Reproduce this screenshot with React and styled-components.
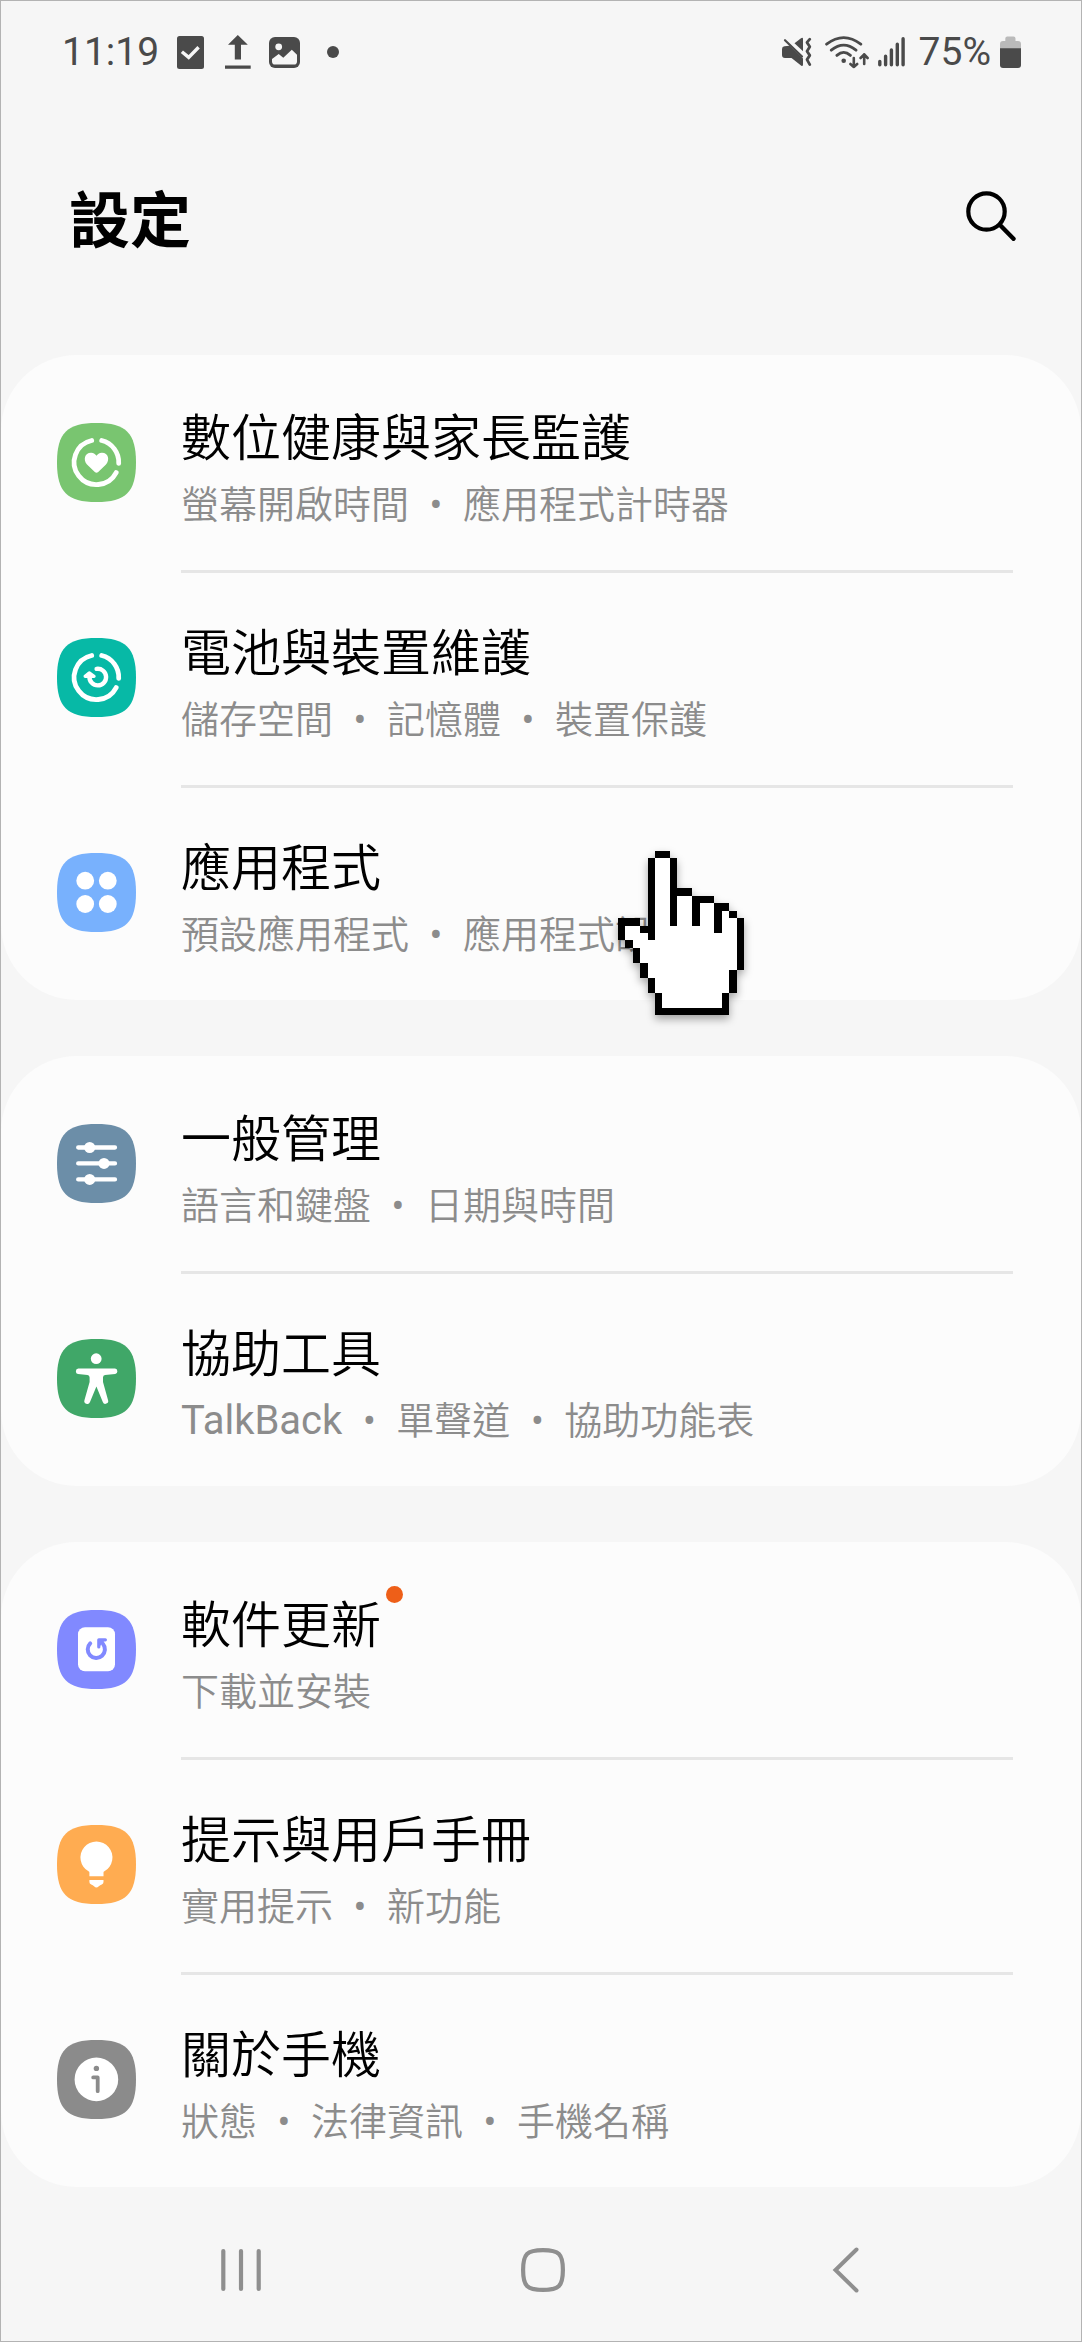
import styled, { createGlobalStyle } from 'styled-components';

const GlobalStyle = createGlobalStyle`
    * {
        box-sizing: border-box;
    }
    body {
        margin: 0;
        background: #f5f5f5;
        font-family: Roboto, "Noto Sans CJK TC", sans-serif;
    }
    button {
        padding: 0;
        border: none;
        background: none;
        color: inherit;
        cursor: pointer;
    }
    svg {
        display: block;
        flex-shrink: 0;
    }
`;

const Page = styled.div`
    display: flex;
    flex-direction: column;
    min-height: 100vh;
    border: 1px solid #b3b3b3;
    background: #f6f6f6;
`;
const StatusBar = styled.div`
    display: flex;
    justify-content: space-between;
    align-items: center;
    height: 102px;
    padding: 0 60px 0 61px;
    color: #4a4a4a;
    font-size: 39px;
    line-height: 46px;
`;
const StatusGroup = styled.div`
    display: flex;
    align-items: center;
    gap: ${props => props.$gap}px;
`;
const Header = styled.header`
    display: flex;
    justify-content: space-between;
    align-items: center;
    padding: 75px 65px 101px 68px;
    h1 {
        margin: 0;
        padding-top: 12px;
        font-size: 61px;
        font-weight: 700;
        line-height: 64px;
        color: #000;
    }
`;
const Groups = styled.main`
    display: flex;
    flex-direction: column;
    gap: 56px;
`;
const Card = styled.ul`
    margin: 0;
    padding: 0;
    list-style: none;
    border-radius: 76px;
    background: #fcfcfc;
`;
const Row = styled.li`
    position: relative;
`;
const RowLink = styled.a`
    display: flex;
    gap: 45px;
    padding: 0 68px 0 56px;
    text-decoration: none;
    > svg {
        align-self: center;
    }
`;
const RowText = styled.div`
    flex: 1;
    padding: 49px 0 39px;
    border-top: 3px solid ${props => (props.$divider ? '#e6e6e6' : 'transparent')};
    font-weight: 350;
`;
const Title = styled.span`
    display: inline-block;
    position: relative;
    font-size: 50px;
    line-height: 64px;
    color: #000;
    vertical-align: top;
`;
const Badge = styled.span`
    position: absolute;
    top: -8px;
    left: calc(100% + 5px);
    width: 17px;
    height: 17px;
    border-radius: 50%;
    background: #ee5f18;
`;
const Summary = styled.div`
    margin-top: 8px;
    font-size: 38px;
    line-height: 52px;
    color: #8c8c8c;
`;
const Latin = styled.span`
    font-size: 40px;
    font-weight: 400;
    line-height: 1;
`;
const Bullet = styled.span`
    display: inline-block;
    width: 54px;
    font-weight: 400;
    text-align: center;
`;
const Pointer = styled.svg`
    position: absolute;
    top: 66px;
    left: 617px;
    filter: drop-shadow(0 4px 4px rgba(0, 0, 0, .35));
`;
const NavBar = styled.nav`
    display: grid;
    grid-template-columns: repeat(3, 1fr);
    justify-items: center;
    padding: 60px 84px 48px 89px;
    color: #8f8f8f;
`;

/* settings icons, all on the same squircle */
const Squircle = ({ color, children }) => (
    <svg width="79" height="79" viewBox="0 0 79 79" fill="#fff" aria-hidden="true">
        <path fill={color} d="M0 39.5C0 10 10 0 39.5 0S79 10 79 39.5 69 79 39.5 79 0 69 0 39.5Z" />
        {children}
    </svg>
);
const Ring = () => (
    <path
        d="M34.7 17.5A22.3 22.3 0 1 0 59.2 49.6M44.7 17.5A22.3 22.3 0 0 1 61.7 40.3"
        fill="none" stroke="#fff" strokeWidth="4.8" strokeLinecap="round"
    />
);
const WellbeingIcon = () => (
    <Squircle color="#79c570">
        <Ring />
        <path d="M37.8 49 30 41.4C26 37 27.5 29.8 34 29.7 36.5 29.6 38.5 31 39.5 32.8 40.5 31 42.5 29.6 45 29.7 51.5 29.8 53 37 49 41.4L41.2 49Q39.5 50.4 37.8 49Z" />
    </Squircle>
);
const CareIcon = () => (
    <Squircle color="#07b9a6">
        <Ring />
        <g fill="none" stroke="#fff" strokeWidth="4.4" strokeLinecap="round" strokeLinejoin="round">
            <path d="M39.6 30.9A8.3 8.3 0 1 1 32.5 38.6" />
            <path strokeWidth="3.4" d="M28.2 38.3 32.2 35 37 38.3Z" />
        </g>
    </Squircle>
);
const AppsIcon = () => (
    <Squircle color="#78b1fd">
        <circle cx="28.2" cy="27.7" r="8.9" />
        <circle cx="50.8" cy="27.7" r="8.9" />
        <circle cx="28.2" cy="51" r="8.9" />
        <circle cx="50.8" cy="51" r="8.9" />
    </Squircle>
);
const GeneralIcon = () => (
    <Squircle color="#6c8ea8">
        <path d="M21.2 23.5H58M21.2 39.4H58M21.2 55.4H58" stroke="#fff" strokeWidth="4.3" strokeLinecap="round" />
        <circle cx="32.7" cy="23.5" r="5.5" />
        <circle cx="47" cy="39.4" r="5.5" />
        <circle cx="32.7" cy="55.4" r="5.5" />
    </Squircle>
);
const AccessibilityIcon = () => (
    <Squircle color="#40a768">
        <circle cx="39.2" cy="19.7" r="5.4" />
        <path d="M21.3 29.5H58A2.8 2.8 0 0 1 58.2 35L48 36Q46 36.3 46 38.5V43L51 61A2.7 2.7 0 0 1 45.8 63L39.4 47.5 33 63A2.7 2.7 0 0 1 27.5 61L32.6 43V38.5Q32.6 36.3 30.5 36L21 35A2.8 2.8 0 0 1 21.3 29.5Z" />
    </Squircle>
);
const UpdateIcon = () => (
    <Squircle color="#8189ff">
        <rect x="21" y="17.3" width="37" height="44" rx="7" />
        <g fill="none" stroke="#8189ff" strokeWidth="4" strokeLinecap="round">
            <path d="M33.2 33.3A8.6 8.6 0 1 0 45.9 33.8" />
            <path strokeWidth="3.2" strokeLinejoin="round" d="M41.8 37V29.8H48.4" />
        </g>
        <path fill="#8189ff" d="M41 29H49L43 36Z" />
    </Squircle>
);
const TipsIcon = () => (
    <Squircle color="#ffac51">
        <path d="M32.4 51.3V47.5Q32.4 46.8 31.5 46.3A16 16 0 1 1 47.4 46.3Q46.5 46.8 46.5 47.5V51.3Z" />
        <path d="M32.4 55H46.5V57Q46.5 58.8 44.8 59.4C42.5 60 41 62.5 39.4 62.5S36.5 60 34.2 59.4Q32.4 58.8 32.4 57Z" />
    </Squircle>
);
const AboutIcon = () => (
    <Squircle color="#8b8b8b">
        <circle cx="39.4" cy="39.4" r="21.8" />
        <circle cx="39.4" cy="28.4" r="2.7" fill="#8b8b8b" />
        <path d="M36.2 37.4H40.7V51.2" fill="none" stroke="#8b8b8b" strokeWidth="3.8" strokeLinecap="round" strokeLinejoin="round" />
    </Squircle>
);

/* status bar icons */
const TaskIcon = () => (
    <svg width="28" height="33" viewBox="0 0 28 33">
        <rect width="27" height="33" rx="2.5" fill="#4a4a4a" />
        <path d="M4.9 15.7 11.7 21.4 21.6 11.3" fill="none" stroke="#f6f6f6" strokeWidth="3.4" />
    </svg>
);
const UploadIcon = () => (
    <svg width="28" height="34" viewBox="-2 0 28 34" fill="#4a4a4a">
        <path d="M12.8 0 22.8 9.7H16V24.5H9.8V9.7H3ZM0 30.5H25.7V33.7H0Z" />
    </svg>
);
const ImageIcon = () => (
    <svg width="32" height="31" viewBox="0 0 32 31">
        <rect width="31" height="31" rx="6" fill="#4a4a4a" />
        <g fill="#f6f6f6">
            <circle cx="9.7" cy="9.8" r="3.4" />
            <path d="M3 22 9.7 17 14.3 20.8 22.8 12.8 28 17.8V24.5Q28 27.6 25 27.6H6Q3 27.6 3 24.5Z" />
        </g>
    </svg>
);
const MoreDot = () => (
    <svg width="28" height="12" viewBox="0 0 28 12">
        <circle cx="14" cy="6" r="6" fill="#4a4a4a" />
    </svg>
);
const VibrateIcon = () => (
    <svg width="34" height="33" viewBox="0 0 34 33" fill="#4a4a4a">
        <path d="M12.5 7.2 19 2.2Q21 1.2 21 3V15.2Z" />
        <path d="M2.5 10.2 7.5 9.8 21 22.5V28.5Q21 30.8 19 29.4L9.5 22H3Q0 22 0 19V13Q0 10.5 2.5 10.2Z" />
        <g fill="none" stroke="#4a4a4a" strokeLinecap="round" strokeLinejoin="round">
            <path strokeWidth="2.2" d="M3 4.2 20 20.6" />
            <path strokeWidth="2.8" d="M27.8 3.2 25 6.4 27.8 10.8 25 15.2 27.8 19.4 25 23.6 27.8 28.6" />
        </g>
    </svg>
);
const WifiIcon = () => (
    <svg width="44" height="33" viewBox="0 0 44 33" fill="none" stroke="#4a4a4a" strokeWidth="2.8" strokeLinecap="round">
        <path d="M1.6 8.2Q18.7-5 35.8 8.2M6.3 14.2Q18.7 4 31 14.2M11.9 19.4Q18.7 13.4 25.4 19.4" />
        <circle cx="18.7" cy="24.7" r="2.3" fill="#4a4a4a" stroke="none" />
        <path strokeWidth="2.6" strokeLinejoin="round" d="M28.8 22V31M25.4 28 28.8 31 32.2 28M39.2 28V18.4M35.6 22 39.2 18.4 42.6 22" />
    </svg>
);
const SignalIcon = () => (
    <svg width="32" height="33" viewBox="0 0 32 33">
        <path
            d="M1.8 25.5V28.8M7.6 20.2V28.8M13.4 14V28.8M19.3 8.3V28.8M25.1 2.8V28.8"
            stroke="#4a4a4a" strokeWidth="3.4" strokeLinecap="round"
        />
    </svg>
);
const BatteryIcon = () => (
    <svg width="21" height="33" viewBox="0 0 21 33">
        <path d="M0 13V8Q0 5 3 5H5.3V2.5Q5.3.5 7.3.5H13.5Q15.5.5 15.5 2.5V5H18Q21 5 21 8V13Z" fill="#bababa" />
        <path d="M0 12.3H21V29Q21 32 18 32H3Q0 32 0 29Z" fill="#4a4a4a" />
    </svg>
);

// black outline drawn one grid cell at a time
const HandPointer = () => (
    <Pointer width="126" height="164" viewBox="0 0 17 22" preserveAspectRatio="none" shapeRendering="crispEdges" aria-hidden="true">
        <path fill="#fff" d="M5 1H7V6H10V7H13V8H15V9H16V16H15V19H14V21H6V19H5V17H4V15H3V13H2V12H1V10H4V1Z" />
        <path
            d="M5 0h2v1h-2ZM4 1h1v11h-1ZM7 1h1v9h-1ZM8 5h2v1h-2ZM10 6h3v1h-2v3h-1ZM13 7h2v1h-1v3h-1ZM15 8h1v1h-1ZM16 9h1v7h-1ZM15 16h1v3h-1ZM14 19h1v3h-10v-3h1v2h8ZM4 17h1v2h-1ZM3 15h1v2h-1ZM2 13h1v2h-1ZM1 12h1v1h-1ZM0 9h3v1h-2v2h-1ZM3 10h1v1h-1Z"
        />
    </Pointer>
);

const groups = [
    [
        { title: '數位健康與家長監護', summary: ['螢幕開啟時間', '應用程式計時器'], Icon: WellbeingIcon },
        { title: '電池與裝置維護', summary: ['儲存空間', '記憶體', '裝置保護'], Icon: CareIcon },
        { title: '應用程式', summary: ['預設應用程式', '應用程式設定'], Icon: AppsIcon, pointed: true },
    ],
    [
        { title: '一般管理', summary: ['語言和鍵盤', '日期與時間'], Icon: GeneralIcon },
        { title: '協助工具', summary: ['TalkBack', '單聲道', '協助功能表'], Icon: AccessibilityIcon },
    ],
    [
        { title: '軟件更新', summary: ['下載並安裝'], Icon: UpdateIcon, badge: true },
        { title: '提示與用戶手冊', summary: ['實用提示', '新功能'], Icon: TipsIcon },
        { title: '關於手機', summary: ['狀態', '法律資訊', '手機名稱'], Icon: AboutIcon },
    ],
];

const isLatin = text => /^[A-Za-z]+$/.test(text);

const SettingRow = ({ item, divider }) => (
    <Row>
        <RowLink href="#">
            <item.Icon />
            <RowText $divider={divider}>
                <Title>
                    {item.title}
                    {item.badge && <Badge />}
                </Title>
                <Summary>
                    {item.summary.map((part, i) => (
                        <span key={part}>
                            {i > 0 && <Bullet>•</Bullet>}
                            {isLatin(part) ? <Latin>{part}</Latin> : part}
                        </span>
                    ))}
                </Summary>
            </RowText>
        </RowLink>
        {item.pointed && <HandPointer />}
    </Row>
);

const App = () => {
    return (
        <Page lang="zh-Hant">
            <GlobalStyle />
            <StatusBar>
                <StatusGroup $gap={18}>
                    <span>11:19</span>
                    <TaskIcon />
                    <UploadIcon />
                    <ImageIcon />
                    <MoreDot />
                </StatusGroup>
                <StatusGroup $gap={9}>
                    <VibrateIcon />
                    <WifiIcon />
                    <SignalIcon />
                    <span>75%</span>
                    <BatteryIcon />
                </StatusGroup>
            </StatusBar>
            <Header>
                <h1>設定</h1>
                <button aria-label="搜尋">
                    <svg width="50" height="50" viewBox="0 0 50 50" fill="none" stroke="#000" strokeLinecap="round">
                        <circle cx="20.5" cy="20.5" r="18.2" strokeWidth="4.2" />
                        <path d="M34.5 34.5 47.5 47.8" strokeWidth="4.4" />
                    </svg>
                </button>
            </Header>
            <Groups>
                {groups.map((items, i) => (
                    <Card key={i}>
                        {items.map((item, j) => (
                            <SettingRow key={item.title} item={item} divider={j > 0} />
                        ))}
                    </Card>
                ))}
            </Groups>
            <NavBar>
                <button aria-label="最近">
                    <svg width="46" height="46" viewBox="0 0 46 46" stroke="currentColor" strokeWidth="4.2" strokeLinecap="round">
                        <path d="M5.3 4V42M23 4V42M40.7 4V42" />
                    </svg>
                </button>
                <button aria-label="主頁">
                    <svg width="46" height="46" viewBox="0 0 46 46" fill="none" stroke="currentColor" strokeWidth="4.2">
                        <path d="M3.1 23C3.1 7 7 3.1 23 3.1S42.9 7 42.9 23 39 42.9 23 42.9 3.1 39 3.1 23Z" />
                    </svg>
                </button>
                <button aria-label="返回">
                    <svg width="46" height="46" viewBox="0 0 46 46" fill="none" stroke="currentColor" strokeWidth="4" strokeLinecap="round">
                        <path d="M33.5 2.5 12.5 23 33.5 43.5" />
                    </svg>
                </button>
            </NavBar>
        </Page>
    )
}

export default App;
